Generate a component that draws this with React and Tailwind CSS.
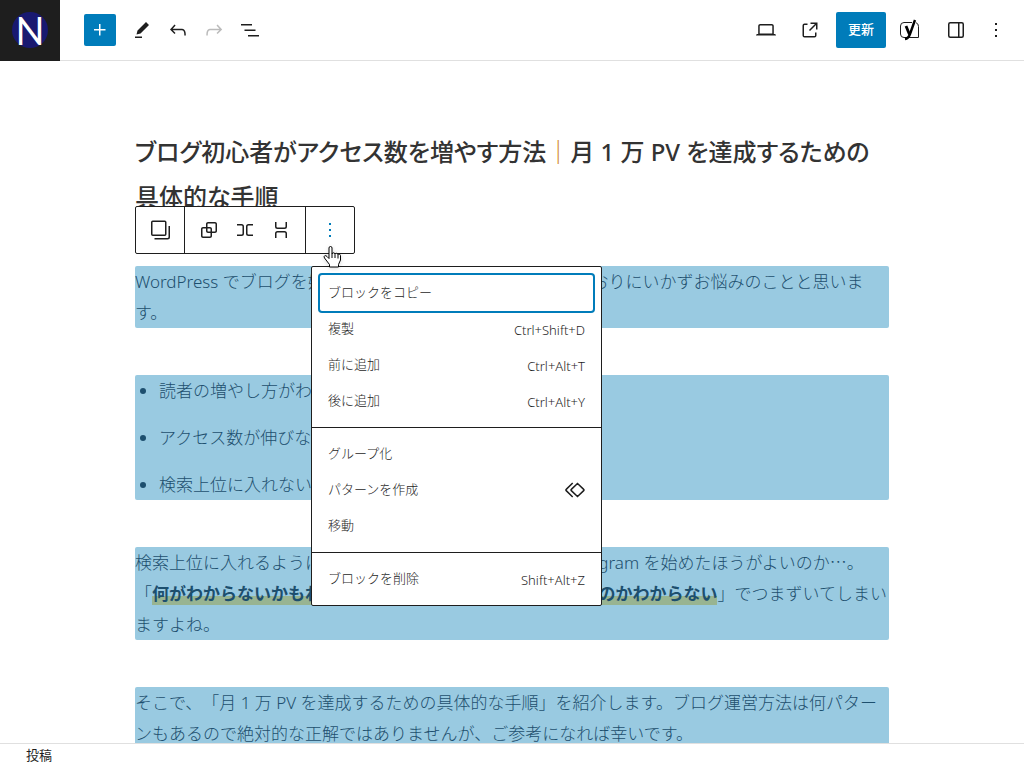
const headerTools = [
  { label: "ツール", path: "m19 7-3-3-8.5 8.5-1 4 4-1L19 7Zm-7 11.5H5V20h7v-1.5Z" },
  {
    label: "元に戻す",
    path: "M18.3 11.7c-.6-.6-1.4-.9-2.3-.9H6.7l2.9-3.3-1.1-1-4.5 5L8.5 16l1-1-2.7-2.7H16c.5 0 .9.2 1.3.5 1 1 1 3.4 1 4.5v.3h1.5v-.2c0-1.5 0-4.3-1.5-5.7z",
  },
  {
    label: "やり直す",
    disabled: true,
    path: "M15.6 6.5l-1.1 1 2.9 3.3H8c-.9 0-1.7.3-2.3.9-1.4 1.5-1.4 4.2-1.4 5.6v.2h1.5v-.3c0-1.1 0-3.5 1-4.5.3-.3.7-.5 1.3-.5h9.2L14.5 15l1.1 1.1 4.6-4.6-4.6-5z",
  },
  { label: "リスト表示", path: "M3 6h11v1.5H3V6Zm3.5 5.5h11V13h-11v-1.5ZM21 17H10v1.5h11V17Z" },
];

const menuGroups = [
  [
    { label: "ブロックをコピー", active: true },
    { label: "複製", shortcut: "Ctrl+Shift+D" },
    { label: "前に追加", shortcut: "Ctrl+Alt+T" },
    { label: "後に追加", shortcut: "Ctrl+Alt+Y" },
  ],
  [{ label: "グループ化" }, { label: "パターンを作成", icon: true }, { label: "移動" }],
  [{ label: "ブロックを削除", shortcut: "Shift+Alt+Z" }],
];

const Icon = ({ path }) => (
  <svg viewBox="0 0 24 24" className="size-6 fill-current" aria-hidden="true">
    <path d={path} />
  </svg>
);

const LineIcon = ({ children }) => (
  <svg
    viewBox="0 0 24 24"
    className="size-6 fill-none stroke-current stroke-[1.5]"
    aria-hidden="true"
  >
    {children}
  </svg>
);

const MORE = "M13 19h-2v-2h2v2zm0-6h-2v-2h2v2zm0-6h-2V5h2v2z";

const Header = () => (
  <header className="flex h-[61px] shrink-0 items-center justify-between border-b border-[#e0e0e0]">
    <div className="flex items-center">
      <a
        href="#"
        aria-label="投稿一覧"
        className="flex h-[61px] w-15 items-center justify-center bg-[#1e1e1e]"
      >
        <span className="flex size-9 items-center justify-center rounded-full bg-[#191970] font-['Lato'] text-[38px] leading-none text-white">
          N
        </span>
      </a>
      <button
        type="button"
        aria-label="ブロックを追加"
        className="mr-2 ml-6 flex size-8 items-center justify-center rounded-xs bg-[#007cba] text-white"
      >
        <Icon path="M11 12.5V17.5H12.5V12.5H17.5V11H12.5V6H11V11H6V12.5H11Z" />
      </button>
      {headerTools.map((tool) => (
        <button
          key={tool.label}
          type="button"
          aria-label={tool.label}
          disabled={tool.disabled}
          className="flex size-9 items-center justify-center disabled:text-[#bbb]"
        >
          <Icon path={tool.path} />
        </button>
      ))}
    </div>

    <div className="flex items-center gap-2 pr-3.5">
      <button type="button" aria-label="表示" className="flex size-9 items-center justify-center">
        <Icon path="M20.5 16h-.7V8c0-1.1-.9-2-2-2H6.2c-1.1 0-2 .9-2 2v8h-.7c-.8 0-1.5.7-1.5 1.5h20c0-.8-.7-1.5-1.5-1.5zM5.7 8c0-.3.2-.5.5-.5h11.6c.3 0 .5.2.5.5v7.6H5.7V8z" />
      </button>
      <a href="#" aria-label="投稿を表示" className="flex size-9 items-center justify-center">
        <Icon path="M19.5 4.5h-7V6h4.44l-5.97 5.97 1.06 1.06L18 7.06v4.44h1.5v-7Zm-13 1a2 2 0 0 0-2 2v10a2 2 0 0 0 2 2h10a2 2 0 0 0 2-2v-3H17v3a.5.5 0 0 1-.5.5h-10a.5.5 0 0 1-.5-.5v-10a.5.5 0 0 1 .5-.5h3V5.5h-3Z" />
      </a>
      <div className="flex items-center">
        <button
          type="button"
          className="mr-1 h-9 rounded-xs bg-[#007cba] px-3 text-[13px] font-medium text-white"
        >
          更新
        </button>
        <button
          type="button"
          aria-label="Yoast SEO"
          className="flex h-9 w-10 items-center justify-center"
        >
          {/* rounded box outline with the slanted brand stroke on top */}
          <svg viewBox="0 0 24 24" className="size-6 fill-none stroke-[#1e1e1e]" aria-hidden="true">
            <path
              d="M14 4.500H6A3.500 3.500 0 0 0 2.500 8v8A3.500 3.500 0 0 0 6 19.500H20.500V8.500q0-3-2.500-3.800"
              strokeWidth="1"
            />
            <path d="M8 8l3.500 8.500" stroke="#000" strokeWidth="2.800" />
            <path d="M17 2l-5 14q-1.500 4.500-5 5" stroke="#000" strokeWidth="2.400" />
          </svg>
        </button>
        <button type="button" aria-label="設定" className="flex h-9 w-13 items-center justify-center">
          <LineIcon>
            <rect x="4.750" y="4.750" width="14.500" height="14.500" rx="1.500" />
            <path d="M14.750 5v14" />
          </LineIcon>
        </button>
        <button type="button" aria-label="オプション" className="flex h-9 w-7 items-center justify-center">
          <Icon path={MORE} />
        </button>
      </div>
    </div>
  </header>
);

const BlockToolbar = () => (
  <div
    role="toolbar"
    aria-label="ブロックツール"
    className="absolute -top-15 left-0 z-10 flex h-12 divide-x divide-[#1e1e1e] rounded-xs border border-[#1e1e1e] bg-white text-[#1e1e1e]"
  >
    <button type="button" aria-label="複数ブロック" className="flex w-[49px] items-center justify-center">
      <LineIcon>
        <rect x="3.750" y="3.250" width="14" height="14" rx="1" />
        <path d="M21.250 8v11a1.750 1.750 0 0 1-1.750 1.750H6.500" />
      </LineIcon>
    </button>
    <div className="flex px-1.5">
      <button type="button" aria-label="グループ化" className="flex w-9 items-center justify-center">
        <Icon path="M18 4h-7c-1.100 0-2 .9-2 2v3H6c-1.100 0-2 .9-2 2v7c0 1.100.9 2 2 2h7c1.100 0 2-.9 2-2v-3h3c1.100 0 2-.9 2-2V6c0-1.100-.9-2-2-2zm-4.500 14c0 .3-.2.5-.5.5H6c-.3 0-.5-.2-.5-.5v-7c0-.3.2-.5.5-.5h3V13c0 1.100.9 2 2 2h2.500v3zm0-4.500H11c-.3 0-.5-.2-.5-.5v-2.500H13c.3 0 .5.2.5.5v2.500zm5-.5c0 .3-.2.5-.5.5h-3V11c0-1.100-.9-2-2-2h-2.500V6c0-.3.2-.5.5-.5h7c.3 0 .5.2.5.5v7z" />
      </button>
      <button type="button" aria-label="横並び" className="flex w-9 items-center justify-center">
        <LineIcon>
          <path d="M4 6.750h4.500q1.750 0 1.750 1.750v7q0 1.750-1.750 1.750H4M20 6.750h-4.500q-1.750 0-1.750 1.750v7q0 1.750 1.750 1.750H20" />
        </LineIcon>
      </button>
      <button type="button" aria-label="縦積み" className="flex w-9 items-center justify-center">
        <LineIcon>
          <path d="M6.750 4v4.500q0 1.750 1.750 1.750h7q1.750 0 1.750-1.750V4M6.750 20v-4.500q0-1.750 1.750-1.750h7q1.750 0 1.750 1.750V20" />
        </LineIcon>
      </button>
    </div>
    <button
      type="button"
      aria-label="オプション"
      aria-expanded="true"
      className="flex w-12 items-center justify-center text-[#007cba]"
    >
      <Icon path={MORE} />
    </button>
  </div>
);

const OptionsMenu = () => (
  <div
    role="menu"
    className="absolute top-0 left-44 z-20 w-[291px] divide-y divide-[#1e1e1e] rounded-xs border border-[#1e1e1e] bg-white text-[13px] leading-5 text-[#1e1e1e]"
  >
    {menuGroups.map((group, i) => (
      <div key={i} role="group" className="p-2">
        {group.map((item) => (
          <button
            key={item.label}
            type="button"
            role="menuitem"
            className={`flex h-9 w-full items-center justify-between px-2 ${
              item.active ? "rounded-xs ring-2 ring-[#007cba]" : ""
            }`}
          >
            <span className="pb-0.5">{item.label}</span>
            {item.shortcut && <span className="pt-0.5">{item.shortcut}</span>}
            {item.icon && (
              <span className="-mr-0.5">
                <LineIcon>
                  <path d="M14.500 5.500l6.200 5.900a.8.8 0 0 1 0 1.200l-6.200 5.900-6.200-5.900a.8.8 0 0 1 0-1.200zM9.700 5l-6.500 6.400a.8.8 0 0 0 0 1.200L9.700 19" />
                </LineIcon>
              </span>
            )}
          </button>
        ))}
      </div>
    ))}
  </div>
);

const Pointer = () => (
  <svg
    viewBox="0 0 20 24"
    className="absolute -top-5 left-[188px] z-30 h-6 w-5 drop-shadow-sm"
    aria-hidden="true"
  >
    <path
      d="M6 2q0-1.500 1.500-1.500T9 2v6q.2-1.200 1.500-1.200T12 8.300q.2-1 1.500-1T15 8.800q.3-.8 1.300-.6t1.200 1.300V14l-2 4.500v2.500H6.500v-2.500L1.500 12q-1-1.500.2-2.200T4 10.500l2 2z"
      fill="#fff"
      stroke="#000"
    />
    <path d="M9 8v4M12 8.500V12M15 9v3.500" fill="none" stroke="#000" />
  </svg>
);

const App = () => {
  return (
    <div className="flex h-screen flex-col overflow-hidden bg-white font-['Noto_Sans','Noto_Sans_CJK_JP',sans-serif] text-[#1e1e1e] [text-spacing-trim:space-all]">
      <Header />

      <main className="min-h-0 flex-1 overflow-hidden px-4 pt-[68px]">
        <article className="mx-auto max-w-[754px] text-[17px] leading-[31px] font-light text-[#1d4f6e]">
          <h1 className="mb-[47px] text-2xl leading-[45px] font-medium text-[#333] [font-feature-settings:'palt']">
            ブログ初心者がアクセス数を増やす方法
            <span className="text-[#d08a2c]">｜</span>
            月 1 万 PV を達成するための
            <br />
            具体的な手順
          </h1>

          <div className="relative mb-[47px]">
            <BlockToolbar />
            <OptionsMenu />
            <Pointer />
            <p className="rounded-xs bg-[#99cae1]">
              WordPress でブログを始めましたが PV も伸び悩み、思いどおりにいかずお悩みのことと思います。
            </p>
          </div>

          <ul className="mb-[47px] list-disc space-y-4 rounded-xs bg-[#99cae1] pl-6">
            <li>読者の増やし方がわからない</li>
            <li>アクセス数が伸びない</li>
            <li>検索上位に入れない</li>
          </ul>

          <p className="mb-[47px] rounded-xs bg-[#99cae1]">
            検索上位に入れるようになるにはどうしたら？それともInstagram を始めたほうがよいのか
            <span className="font-['Noto_Sans_CJK_JP'] leading-none">…</span>。
            <br />「
            <strong className="bg-linear-to-b from-transparent from-60% to-[#98b491] to-60% font-bold">
              何がわからないかもわからないし 何から手をつけたらいいのかわからない
            </strong>
            」でつまずいてしまいますよね。
          </p>

          <p className="rounded-xs bg-[#99cae1]">
            そこで、「月 1 万 PV を達成するための具体的な手順」を紹介します。ブログ運営方法は何パターンもあるので絶対的な正解ではありませんが、ご参考になれば幸いです。
          </p>
        </article>
      </main>

      <footer className="flex h-[25px] shrink-0 items-center border-t border-[#e0e0e0] bg-white px-[26px] text-[13px]">
        投稿
      </footer>
    </div>
  );
};

export default App;
